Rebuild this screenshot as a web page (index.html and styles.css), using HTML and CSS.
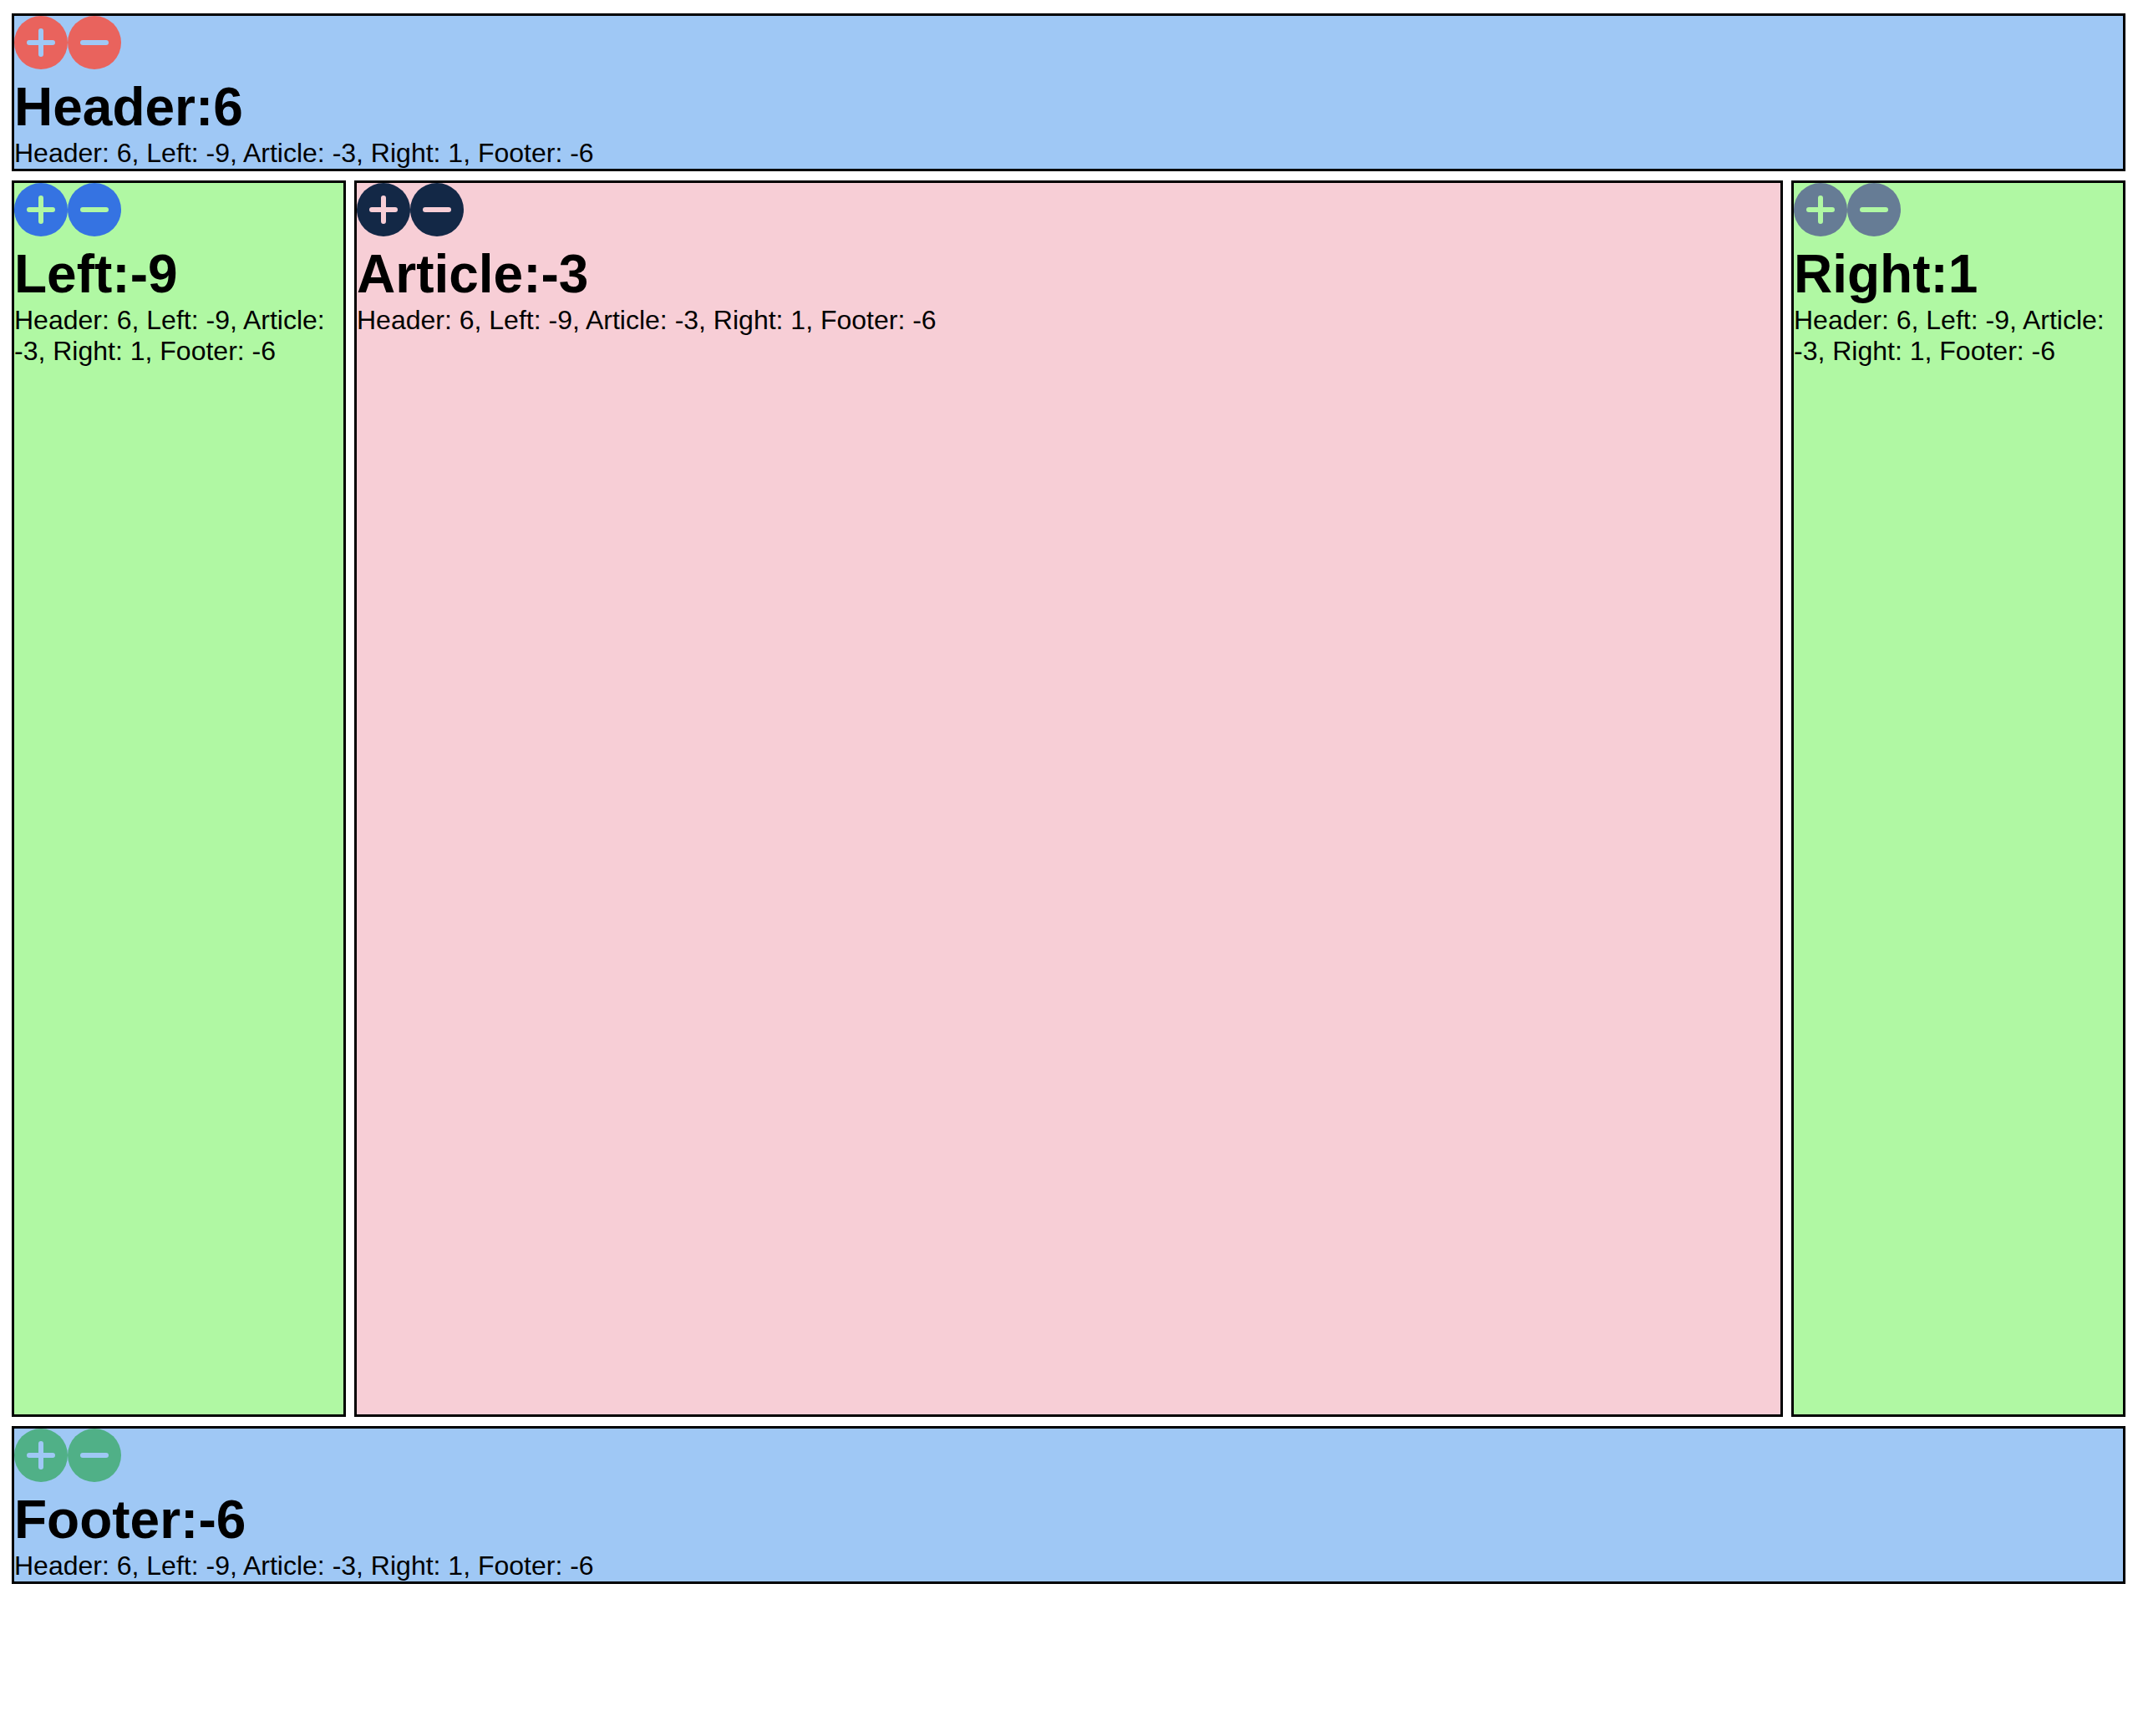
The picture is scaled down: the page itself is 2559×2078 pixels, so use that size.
FILE: index.html
```html
<!DOCTYPE html>
<html>
<head>
	<title>Layout counters</title>
	<link rel="stylesheet" href="styles.css">
</head>
<body>
	<!-- Header -->
	<header class="panel panel-blue btn-red">
		<div class="controls">
			<svg class="ctl" viewBox="0 0 64 64"><circle cx="32" cy="32" r="32"/><path d="M18 32H46M32 18V46"/></svg><svg class="ctl" viewBox="0 0 64 64"><circle cx="32" cy="32" r="32"/><path d="M18 32H46"/></svg>
		</div>
		<h1>Header:6</h1>
		<p>Header: 6, Left: -9, Article: -3, Right: 1, Footer: -6</p>
	</header>

	<div class="middle">
		<!-- Left -->
		<aside class="panel panel-green btn-blue">
			<div class="controls">
				<svg class="ctl" viewBox="0 0 64 64"><circle cx="32" cy="32" r="32"/><path d="M18 32H46M32 18V46"/></svg><svg class="ctl" viewBox="0 0 64 64"><circle cx="32" cy="32" r="32"/><path d="M18 32H46"/></svg>
			</div>
			<h1>Left:-9</h1>
			<p>Header: 6, Left: -9, Article: -3, Right: 1, Footer: -6</p>
		</aside>

		<!-- Article -->
		<article class="panel panel-pink btn-navy">
			<div class="controls">
				<svg class="ctl" viewBox="0 0 64 64"><circle cx="32" cy="32" r="32"/><path d="M18 32H46M32 18V46"/></svg><svg class="ctl" viewBox="0 0 64 64"><circle cx="32" cy="32" r="32"/><path d="M18 32H46"/></svg>
			</div>
			<h1>Article:-3</h1>
			<p>Header: 6, Left: -9, Article: -3, Right: 1, Footer: -6</p>
		</article>

		<!-- Right -->
		<aside class="panel panel-green btn-slate">
			<div class="controls">
				<svg class="ctl" viewBox="0 0 64 64"><circle cx="32" cy="32" r="32"/><path d="M18 32H46M32 18V46"/></svg><svg class="ctl" viewBox="0 0 64 64"><circle cx="32" cy="32" r="32"/><path d="M18 32H46"/></svg>
			</div>
			<h1>Right:1</h1>
			<p>Header: 6, Left: -9, Article: -3, Right: 1, Footer: -6</p>
		</aside>
	</div>

	<!-- Footer -->
	<footer class="panel panel-blue btn-green">
		<div class="controls">
			<svg class="ctl" viewBox="0 0 64 64"><circle cx="32" cy="32" r="32"/><path d="M18 32H46M32 18V46"/></svg><svg class="ctl" viewBox="0 0 64 64"><circle cx="32" cy="32" r="32"/><path d="M18 32H46"/></svg>
		</div>
		<h1>Footer:-6</h1>
		<p>Header: 6, Left: -9, Article: -3, Right: 1, Footer: -6</p>
	</footer>
</body>
</html>
```

FILE: styles.css
```css
body {
	margin: 16px 15px 0 14px;
	font-family: "Liberation Sans", Arial, sans-serif;
	font-size: 32px;
	color: #000;
	background: #fff;
}

.panel {
	border: 3px solid #000;
	padding: 0;
	background-color: var(--bg);
}

.panel h1 {
	margin: 0;
	font-size: 64px;
	font-weight: bold;
	line-height: normal;
}

.panel p {
	margin: 0;
	line-height: normal;
}

/* backgrounds */
.panel-blue {
	--bg: #9fc8f5;
}
.panel-green {
	--bg: #b0f8a3;
}
.panel-pink {
	--bg: #f7ced6;
}

/* middle row */
.middle {
	display: grid;
	grid-template-columns: 400px 1fr 400px;
	column-gap: 10px;
	height: 1480px;
	margin: 11px 0;
}

/* +/- buttons */
.controls {
	display: flex;
	height: 64px;
	margin-bottom: 8px;
}
.ctl {
	width: 64px;
	height: 64px;
	display: block;
	cursor: pointer;
}
.ctl circle {
	fill: var(--btn);
}
.ctl path {
	stroke: var(--bg);
	stroke-width: 6;
	stroke-linecap: round;
	fill: none;
}

.btn-red {
	--btn: #e9635d;
}
.btn-blue {
	--btn: #3573e2;
}
.btn-navy {
	--btn: #132846;
}
.btn-slate {
	--btn: #667c95;
}
.btn-green {
	--btn: #50b087;
}
```
